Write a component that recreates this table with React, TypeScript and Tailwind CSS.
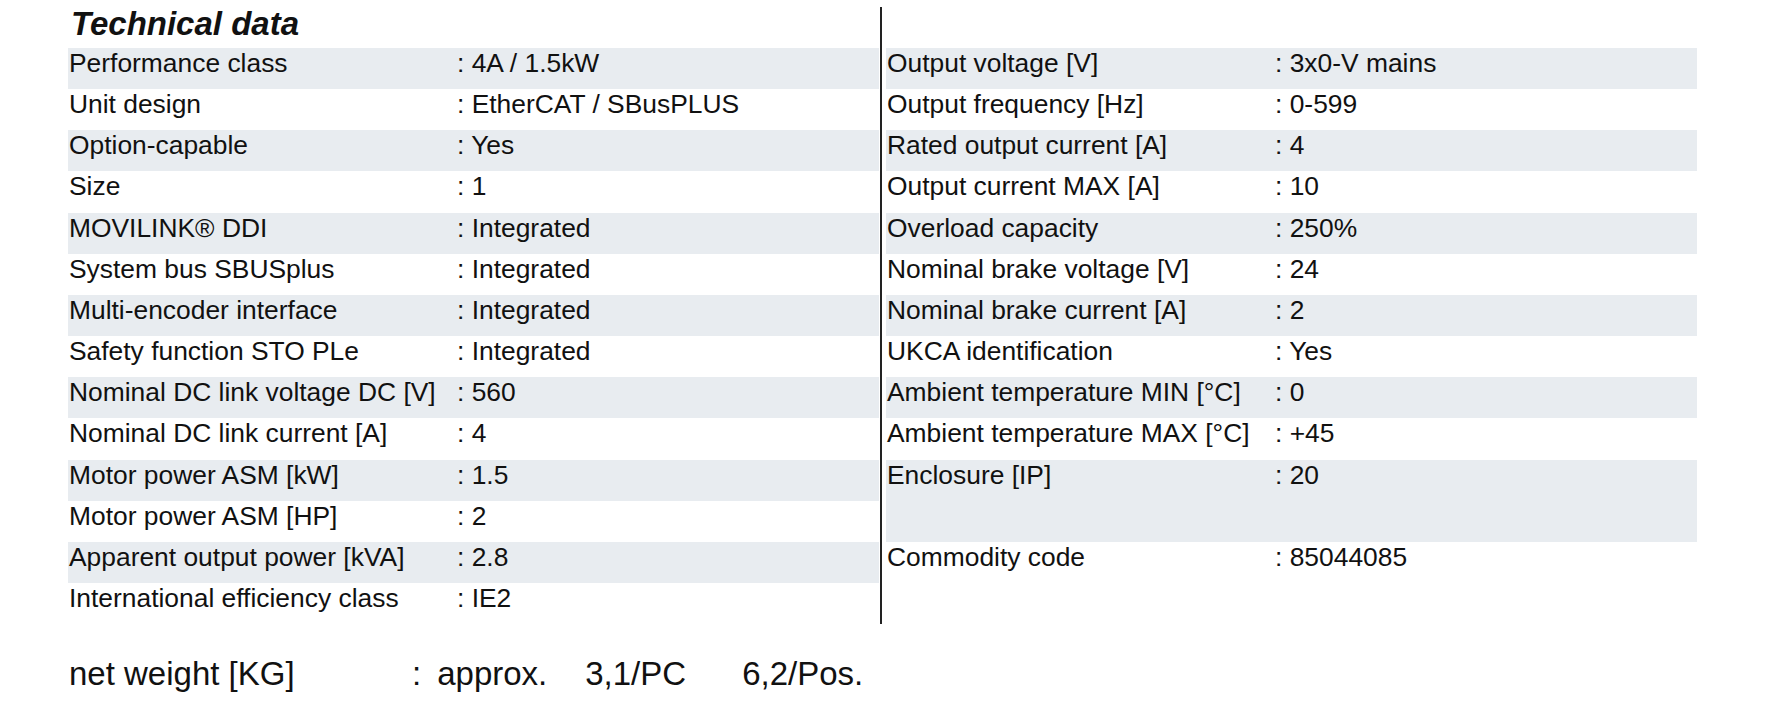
const left: [string, string][] = [
  ["Performance class", "4A / 1.5kW"],
  ["Unit design", "EtherCAT / SBusPLUS"],
  ["Option-capable", "Yes"],
  ["Size", "1"],
  ["MOVILINK® DDI", "Integrated"],
  ["System bus SBUSplus", "Integrated"],
  ["Multi-encoder interface", "Integrated"],
  ["Safety function STO PLe", "Integrated"],
  ["Nominal DC link voltage DC [V]", "560"],
  ["Nominal DC link current [A]", "4"],
  ["Motor power ASM [kW]", "1.5"],
  ["Motor power ASM [HP]", "2"],
  ["Apparent output power [kVA]", "2.8"],
  ["International efficiency class", "IE2"],
]

const right: [string, string, boolean][] = [
  ["Output voltage [V]", "3x0-V mains", true],
  ["Output frequency [Hz]", "0-599", false],
  ["Rated output current [A]", "4", true],
  ["Output current MAX [A]", "10", false],
  ["Overload capacity", "250%", true],
  ["Nominal brake voltage [V]", "24", false],
  ["Nominal brake current [A]", "2", true],
  ["UKCA identification", "Yes", false],
  ["Ambient temperature MIN [°C]", "0", true],
  ["Ambient temperature MAX [°C]", "+45", false],
  ["Enclosure [IP]", "20", true],
  ["", "", true],
  ["Commodity code", "85044085", false],
]

function Row({ label, value, shaded }: { label: string; value: string; shaded: boolean }) {
  return (
    <div
      className={`flex h-[41.17px] items-start pl-px text-[26.4px] leading-[31px] text-[#111] ${
        shaded ? "bg-[#e8ecf0]" : ""
      }`}
    >
      <span className="w-[388px] whitespace-nowrap">{label}</span>
      {label && <span className="whitespace-nowrap">: {value}</span>}
    </div>
  )
}

export default function App() {
  return (
    <div className="min-h-[720px] w-[1792px] bg-white font-['Liberation_Sans',Arial,sans-serif]">
      <div className="flex pl-[68px] pt-[7px]">
        <div className="w-[811px]">
          <div className="h-[41px] pl-[3px] text-[33px] font-bold italic leading-[33px] text-[#111]">
            Technical data
          </div>
          {left.map(([l, v], i) => (
            <Row key={l} label={l} value={v} shaded={i % 2 === 0} />
          ))}
        </div>
        <div className="ml-px w-[2px] bg-[#222]" />
        <div className="ml-[4px] w-[811px] pt-[41px]">
          {right.map(([l, v, s], i) => (
            <Row key={i} label={l} value={v} shaded={s} />
          ))}
        </div>
      </div>

      <div className="mt-[31px] flex pl-[69px] text-[33px] leading-[37px] text-[#111]">
        <span className="w-[343px] whitespace-nowrap">net weight [KG]</span>
        <span>:</span>
        <span className="ml-[16px]">approx.</span>
        <span className="ml-[38px]">3,1/PC</span>
        <span className="ml-[56px]">6,2/Pos.</span>
      </div>
    </div>
  )
}
